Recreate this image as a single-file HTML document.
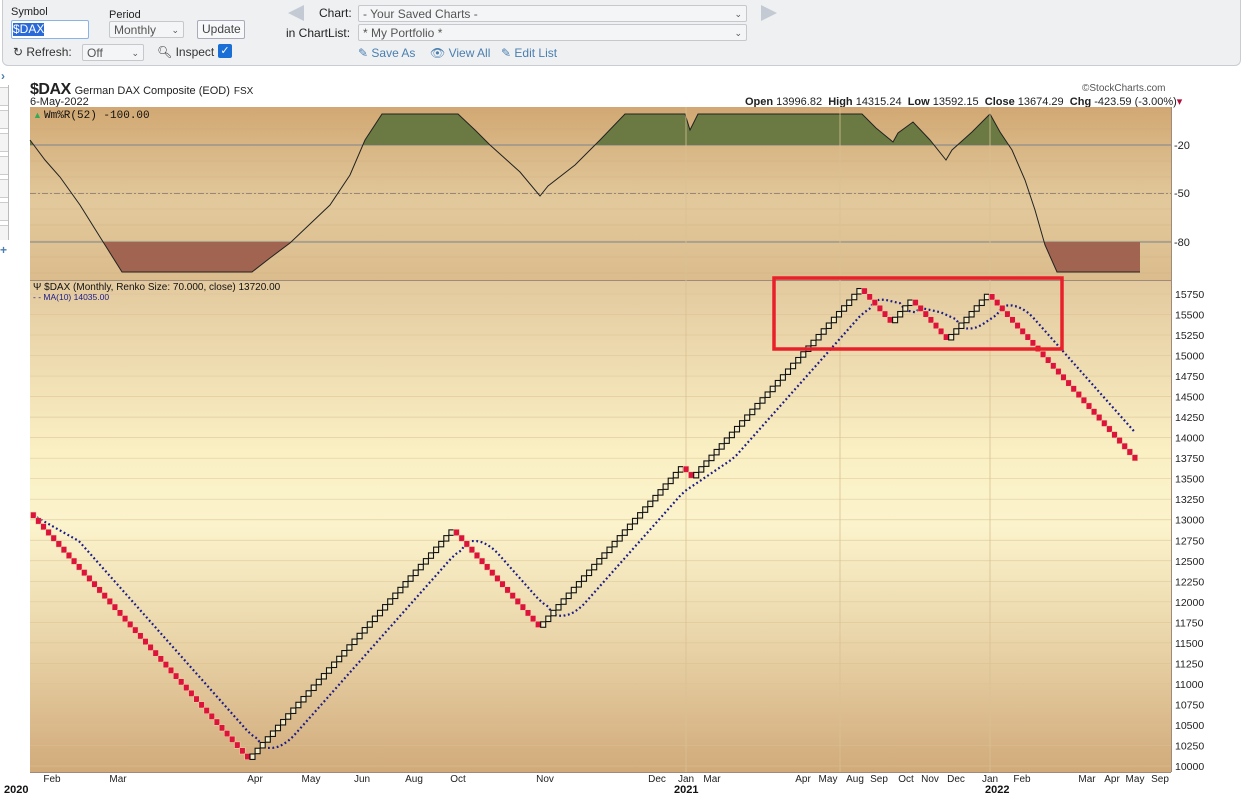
<!DOCTYPE html>
<html><head><meta charset="utf-8">
<style>
*{margin:0;padding:0;box-sizing:border-box}
body{width:1241px;height:800px;background:#fff;font-family:"Liberation Sans",Arial,sans-serif;position:relative;overflow:hidden;font-size:12px;color:#222}
.tb{position:absolute;left:2px;top:0;width:1239px;height:66px;background:#eef0f2;border:1px solid #c9cdd2;border-top:none;border-radius:0 0 6px 6px}
.a{position:absolute;white-space:nowrap}
.sel{position:absolute;background:#f4f5f6;border:1px solid #c5c8cc;border-radius:2px;color:#555;font-size:12px;padding:1px 4px;height:17px;line-height:14px}
.lnk{color:#4a7fb0;font-size:12px}
</style></head><body>
<div class="tb">
<div class="a" style="left:8px;top:6px;font-size:11px">Symbol</div>
<div class="a" style="left:8px;top:20px;width:78px;height:19px;border:1px solid #8ab4e8;background:#fff;border-radius:2px"><span style="background:#2a6ad8;color:#fff;font-size:12px;margin:2px 0 0 1px;display:inline-block;line-height:13px">$DAX</span></div>
<div class="a" style="left:106px;top:9px;font-size:11px">Period</div>
<div class="sel" style="left:106px;top:21px;width:75px">Monthly <span style="float:right;font-size:9px">&#8964;</span></div>
<div class="sel" style="left:194px;top:20px;width:48px;height:19px;background:#f7f8f9;color:#444;text-align:center;border-color:#aab">Update</div>
<div class="a" style="left:10px;top:45px;font-size:12px;color:#333">&#x21bb; Refresh:</div>
<div class="sel" style="left:79px;top:44px;width:62px">Off <span style="float:right;font-size:9px">&#8964;</span></div>
<div class="a" style="left:154px;top:45px;font-size:12px;color:#333">&#x1F50D;&#xFE0E; Inspect</div>
<div class="a" style="left:215px;top:44px;width:14px;height:14px;background:#1a6fd6;border-radius:2px;color:#fff;font-size:11px;text-align:center;line-height:14px">&#10003;</div>
<svg class="a" style="left:283px;top:4px" width="20" height="18"><polygon points="2,9 18,1 18,17" fill="#c4cad3"/></svg>
<svg class="a" style="left:756px;top:4px" width="20" height="18"><polygon points="18,9 2,1 2,17" fill="#c4cad3"/></svg>
<div class="a" style="left:316px;top:6px">Chart:</div>
<div class="sel" style="left:355px;top:5px;width:389px">- Your Saved Charts - <span style="float:right;font-size:9px">&#8964;</span></div>
<div class="a" style="left:283px;top:26px">in ChartList:</div>
<div class="sel" style="left:355px;top:24px;width:389px">* My Portfolio * <span style="float:right;font-size:9px">&#8964;</span></div>
<div class="a lnk" style="left:355px;top:46px">&#9998; Save As</div>
<div class="a lnk" style="left:427px;top:46px">&#128065;&#xFE0E; View All</div>
<div class="a lnk" style="left:498px;top:46px">&#9998; Edit List</div>
</div>
<div class="a" style="left:1px;top:69px;color:#4a7fb0;font-size:12px;font-weight:bold">&#8250;</div>
<div class="a" style="left:0;top:85px;width:9px;height:155px;background:repeating-linear-gradient(#fff 0,#fff 2px,#ccc 2px,#ccc 3px,#f4f4f4 3px,#f4f4f4 20px,#ccc 20px,#ccc 21px,#fff 21px,#fff 23px);border-right:1px solid #bbb"></div>
<div class="a" style="left:0;top:243px;font-size:12px;color:#4a7fb0;font-weight:bold">+</div>
<div class="a" style="left:30px;top:81px;font-size:16px;font-weight:bold;letter-spacing:-0.5px">$DAX <span style="font-size:11px;font-weight:normal;letter-spacing:0">German DAX Composite (EOD)</span> <span style="font-size:10px;font-weight:normal;letter-spacing:0">FSX</span></div>
<div class="a" style="left:30px;top:96px;font-size:11px">6-May-2022</div>
<div class="a" style="left:1082px;top:83px;font-size:10px;color:#555">&#169;StockCharts.com</div>
<div class="a" style="left:745px;top:95px;font-size:11px"><b>Open</b> 13996.82 &nbsp;<b>High</b> 14315.24 &nbsp;<b>Low</b> 13592.15 &nbsp;<b>Close</b> 13674.29 &nbsp;<b>Chg</b> -423.59 (-3.00%)<span style="color:#b0103a">&#9662;</span></div>
<svg id="ch" class="a" style="left:0;top:0" width="1241" height="800"></svg>
<script>
var s='';
s+='<defs><linearGradient id="g1" x1="0" y1="0" x2="0" y2="1"><stop offset="0" stop-color="#d1a873"/><stop offset="0.55" stop-color="#e2c99c"/><stop offset="1" stop-color="#dbbc8c"/></linearGradient>'+
'<linearGradient id="g2" x1="0" y1="0" x2="0" y2="1"><stop offset="0" stop-color="#e3c99e"/><stop offset="0.35" stop-color="#faf0c4"/><stop offset="0.5" stop-color="#fbf3cc"/><stop offset="0.75" stop-color="#e8d2a6"/><stop offset="1" stop-color="#d1aa7a"/></linearGradient>'+
'<clipPath id="cu"><rect x="30" y="107" width="1141" height="38"/></clipPath><clipPath id="cd"><rect x="30" y="242" width="1141" height="38"/></clipPath></defs>';
s+='<rect x="30" y="107" width="1141" height="173" fill="url(#g1)"/>';
s+='<rect x="30" y="280" width="1141" height="492" fill="url(#g2)"/>';
for(var y=113;y<278;y+=16)s+='<line x1="30" x2="1171" y1="'+y+'" y2="'+y+'" stroke="#c9a67a" stroke-width="0.6" opacity="0.5"/>';
s+='<line x1="30" x2="1171" y1="145" y2="145" stroke="#7a8590"/><line x1="30" x2="1171" y1="242" y2="242" stroke="#7a8590"/><line x1="30" x2="1171" y1="193.5" y2="193.5" stroke="#998877" stroke-dasharray="6,2,2,2"/>';
var wp=[[30,140],[45,160],[60,177],[80,205],[100,237],[122,272],[252,272],[270,258],[290,243],[330,205],[350,175],[365,140],[382,114],[458,114],[475,130],[490,145],[520,172],[540,196],[548,186],[575,165],[600,140],[625,114],[685,114],[690,130],[698,114],[862,114],[876,128],[893,142],[898,133],[913,122],[930,140],[946,160],[952,150],[972,132],[990,114],[1000,132],[1012,150],[1025,180],[1035,210],[1045,245],[1057,272],[1140,272]];
var pts=wp.map(function(p){return p.join(',')}).join(' ');
s+='<polygon points="'+pts+' 1140,145 30,145" fill="#6a7a42" clip-path="url(#cu)"/>';
s+='<polygon points="'+pts+' 1140,242 30,242" fill="#a06450" clip-path="url(#cd)"/>';
s+='<polyline points="'+pts+'" fill="none" stroke="#222" stroke-width="1"/>';
s+='<line x1="30" x2="1171" y1="280.5" y2="280.5" stroke="#a08a7a"/>';
s+='<text x="44" y="118" font-size="11" font-family="Liberation Mono,monospace" fill="#111">Wm%R(52) -100.00</text><text x="33" y="118" font-size="9" fill="#3a5">&#9650;</text>';
[['-20',145],['-50',193],['-80',242]].forEach(function(a){s+='<text x="1174" y="'+(a[1]+4)+'" font-size="11" fill="#222">'+a[0]+'</text>'});
function Y(p){return 766-(p-10000)*0.08209;}
for(var p=10000;p<=15750;p+=250){var y=Y(p);s+='<line x1="30" x2="1171" y1="'+y+'" y2="'+y+'" stroke="#d9c193" stroke-width="0.7" opacity="0.7"/><text x="1175" y="'+(y+4)+'" font-size="10.5" fill="#222">'+p+'</text>';}
[686,840,990].forEach(function(x){s+='<line x1="'+x+'" x2="'+x+'" y1="107" y2="772" stroke="#d9c193" stroke-width="0.8"/>'});
s+='<line x1="1171.5" x2="1171.5" y1="107" y2="772" stroke="#a08a7a"/><line x1="30" x2="1171" y1="772.5" y2="772.5" stroke="#a08a7a"/>';
var runs=[[-1,43],[1,40],[-1,17],[1,28],[-1,2],[1,33],[-1,6],[1,4],[-1,7],[1,8],[-1,29]];
var P=13090,x=33,dx=5.1,hs=70*0.08209,closes=[],b='';
runs.forEach(function(r){for(var i=0;i<r[1];i++){var np=P+r[0]*70;var yt=Y(Math.max(P,np)),h=hs;
 if(r[0]<0)b+='<rect x="'+(x-2.5)+'" y="'+(yt-0.3)+'" width="5.6" height="'+(h+0.6)+'" fill="#dc143c" stroke="#f3d7a8" stroke-width="0.5"/>';
 else b+='<rect x="'+(x-2.3)+'" y="'+(yt+0.3)+'" width="5" height="'+(h-0.3)+'" fill="#f5ecc8" stroke="#111" stroke-width="1.1"/>';
 P=np;closes.push([x,P]);x+=dx;}});
var ma='';for(var i=0;i<closes.length;i++){var st=Math.max(0,i-9),sm=0;for(var j=st;j<=i;j++)sm+=closes[j][1];var m=sm/(i-st+1);ma+=(i?' ':'')+closes[i][0]+','+Y(m+((closes[i][1]>m)?-35:35));}
s+='<polyline points="'+ma+'" fill="none" stroke="#1a1a8a" stroke-width="2.2" stroke-dasharray="1.8,2.6"/>';
s+=b;
s+='<rect x="774" y="278" width="288" height="71" fill="none" stroke="#e8202a" stroke-width="3.5"/>';
s+='<text x="33" y="290" font-size="10" fill="#111">&#936; $DAX (Monthly, Renko Size: 70.000, close) 13720.00</text>';
s+='<text x="33" y="300" font-size="8.5" fill="#1a1a8a">- - MA(10) 14035.00</text>';
[['Feb',52],['Mar',118],['Apr',255],['May',311],['Jun',362],['Aug',414],['Oct',458],['Nov',545],['Dec',657],['Jan',686],['Mar',712],['Apr',803],['May',828],['Aug',855],['Sep',879],['Oct',906],['Nov',930],['Dec',956],['Jan',990],['Feb',1022],['Mar',1087],['Apr',1112],['May',1135],['Sep',1160]].forEach(function(a){s+='<text x="'+a[1]+'" y="782" font-size="10" fill="#222" text-anchor="middle">'+a[0]+'</text>'});
[['2020',4],['2021',674],['2022',985]].forEach(function(a){s+='<text x="'+a[1]+'" y="793" font-size="11" font-weight="bold" fill="#111">'+a[0]+'</text>'});
document.getElementById('ch').innerHTML=s;
</script>
</body></html>
